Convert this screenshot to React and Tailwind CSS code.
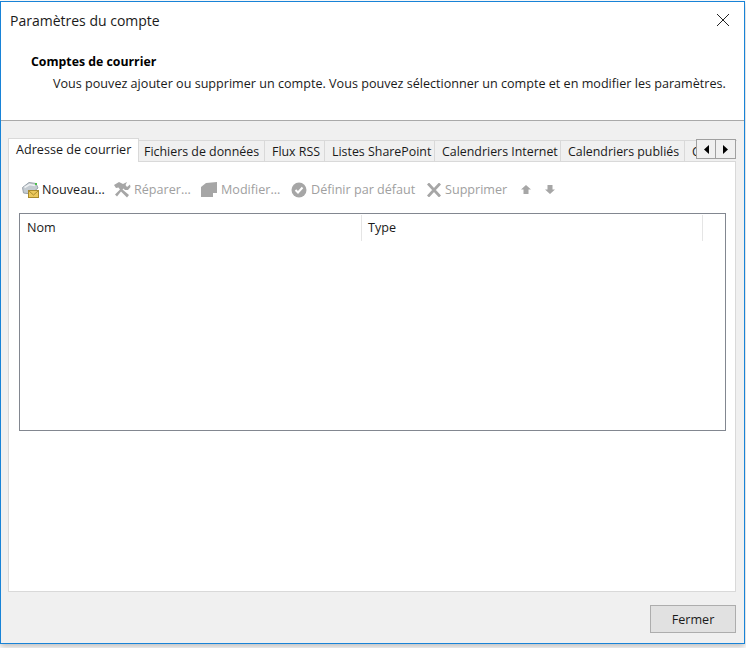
import React from 'react';

const tabs = [
  { label: 'Fichiers de données', width: 'w-[126px]', pad: 'pl-[5px]' },
  { label: 'Flux RSS', width: 'w-[60px]', pad: 'pl-[7px]' },
  { label: 'Listes SharePoint', width: 'w-[110px]', pad: 'pl-[7px]' },
  { label: 'Calendriers Internet', width: 'w-[126px]', pad: 'pl-[7px]' },
  { label: 'Calendriers publiés', width: 'w-[124px]', pad: 'pl-[7px]' },
];

const MailIcon = () => (
  <svg width="18" height="18" viewBox="0 0 18 18">
    <path d="M0.5 6.5 L7 1.5 L14 2.5 L16 7 L9 13 L1.5 12 Z" fill="#c4cbd1" stroke="#9aa3ab" strokeWidth="1" />
    <path d="M2.5 6.5 L7.5 3.5 L13 4.5" fill="none" stroke="#eef1f3" strokeWidth="1.5" />
    <rect x="13" y="2" width="2" height="2" fill="#4cc04c" />
    <rect x="6.5" y="9.5" width="10" height="7" fill="#ecc95c" stroke="#a98a2c" strokeWidth="1" />
    <path d="M6.5 9.5 L11.5 14 L16.5 9.5" fill="none" stroke="#a98a2c" strokeWidth="1" />
  </svg>
);

const RepairIcon = () => (
  <svg width="17" height="16" viewBox="0 0 17 16" fill="#a6a6a6">
    <path d="M0 3 L5 0 L9 2 L11 1 L13 0 L11.5 3 L13 5 L16 2.5 L16.5 5 L14 8 L11 8 L9.5 6.5 L8.5 7.5 L15 13 L13 15.5 L7 9.5 L3 14.5 L1 12.5 L6 7.5 L4.5 5.5 L2 6 Z" />
  </svg>
);

const ModifyIcon = () => (
  <svg width="16" height="16" viewBox="0 0 16 16" fill="#a6a6a6">
    <path d="M0 5 L5 1 L16 0 L16 11 L12 11 L12 15 L0 15 Z" />
  </svg>
);

const DefaultIcon = () => (
  <svg width="16" height="16" viewBox="0 0 16 16">
    <circle cx="8" cy="8" r="7.5" fill="#a6a6a6" />
    <path d="M4.5 8 L7 10.5 L11.5 5.5" fill="none" stroke="#ffffff" strokeWidth="2" />
  </svg>
);

const DeleteIcon = () => (
  <svg width="14" height="14" viewBox="0 0 14 14">
    <path d="M1 0.5 L13 13.5 M13 0.5 L1 13.5" stroke="#a6a6a6" strokeWidth="2.8" fill="none" />
  </svg>
);

const ArrowUp = () => (
  <svg width="10" height="9" viewBox="0 0 10 9" fill="#a6a6a6">
    <path d="M5 0 L10 4.5 L7.5 4.5 L7.5 9 L2.5 9 L2.5 4.5 L0 4.5 Z" />
  </svg>
);

const ArrowDown = () => (
  <svg width="10" height="9" viewBox="0 0 10 9" fill="#a6a6a6">
    <path d="M2.5 0 L7.5 0 L7.5 4.5 L10 4.5 L5 9 L0 4.5 L2.5 4.5 Z" />
  </svg>
);

export default function App() {
  return (
    <div className="w-[746px] h-[648px] bg-white pt-px font-['Open_Sans',sans-serif] text-[12.6px] text-[#1a1a1a] overflow-hidden">
      <div className="w-[745px] h-[643px] border border-[#1883d7] flex flex-col shadow-[0_3px_6px_rgba(0,0,0,0.25)]">
        {/* Header */}
        <div className="h-[119px] shrink-0 bg-white border-b border-[#a9a9a9] relative">
          <div className="pl-[9px] pt-[9px] text-[14px] leading-[20px]">Paramètres du compte</div>
          <button className="absolute right-[14px] top-[11px]">
            <svg width="14" height="14" viewBox="0 0 14 14">
              <path d="M1 1 L13 13 M13 1 L1 13" stroke="#222" strokeWidth="1" fill="none" />
            </svg>
          </button>
          <div className="pl-[30px] pt-[22px] font-bold text-[12.3px] leading-[17px] text-black">Comptes de courrier</div>
          <div className="pl-[52px] pt-[5px] leading-[17px] whitespace-nowrap">
            Vous pouvez ajouter ou supprimer un compte. Vous pouvez sélectionner un compte et en modifier les paramètres.
          </div>
        </div>

        {/* Body */}
        <div className="flex-1 bg-[#f0f0f0] flex flex-col px-[7px]">
          {/* Tabs */}
          <div className="mt-[17px] h-[24px] flex items-end relative z-10">
            <div className="w-[131px] h-[24px] bg-white border border-b-0 border-[#d9d9d9] pl-[7px] leading-[22px] shrink-0 whitespace-nowrap">
              Adresse de courrier
            </div>
            <div className="flex-1 flex h-[22px] overflow-hidden border-t border-[#d9d9d9] text-[12.4px]">
              {tabs.map((tab) => (
                <div
                  key={tab.label}
                  className={`${tab.width} ${tab.pad} shrink-0 border-r border-[#d9d9d9] leading-[22px] whitespace-nowrap`}
                >
                  {tab.label}
                </div>
              ))}
              <div className="pl-[7px] leading-[22px]">C</div>
            </div>
            <div className="absolute right-px top-px flex">
              <div className="w-[20px] h-[20px] border border-[#a0a0a0] bg-[#f0f0f0] flex items-center justify-center">
                <svg width="5" height="9" viewBox="0 0 5 9"><path d="M5 0 L5 9 L0 4.5 Z" fill="#000" /></svg>
              </div>
              <div className="w-[20px] h-[20px] border border-l-0 border-[#a0a0a0] bg-[#f0f0f0] flex items-center justify-center">
                <svg width="5" height="9" viewBox="0 0 5 9"><path d="M0 0 L0 9 L5 4.5 Z" fill="#000" /></svg>
              </div>
            </div>
          </div>

          {/* Tab panel */}
          <div className="w-[728px] h-[431px] -mt-px bg-white border border-[#d9d9d9] flex flex-col px-[10px]">
            <div className="h-[51px] pt-[19px] flex items-start text-[#a0a0a0] leading-[18px] whitespace-nowrap">
              <div className="flex items-center gap-[2px] text-[#1a1a1a] ml-[3px] w-[92px]">
                <MailIcon />
                <span>Nouveau...</span>
              </div>
              <div className="flex items-center gap-[3px] w-[87px]">
                <RepairIcon />
                <span>Réparer...</span>
              </div>
              <div className="flex items-center gap-[4px] w-[90px]">
                <ModifyIcon />
                <span>Modifier...</span>
              </div>
              <div className="flex items-center gap-[4px] w-[136px]">
                <DefaultIcon />
                <span>Définir par défaut</span>
              </div>
              <div className="flex items-center gap-[4px] w-[94px]">
                <DeleteIcon />
                <span>Supprimer</span>
              </div>
              <div className="flex items-center gap-[14px] h-[16px]">
                <ArrowUp />
                <ArrowDown />
              </div>
            </div>

            {/* List */}
            <div className="w-[707px] h-[218px] border border-[#828790] bg-white">
              <div className="flex h-[26px] mt-px leading-[26px] text-[#1a1a1a]">
                <div className="w-[342px] pl-[7px] border-r border-[#e5e5e5]">Nom</div>
                <div className="w-[341px] pl-[6px] border-r border-[#e5e5e5]">Type</div>
              </div>
            </div>
          </div>

          {/* Footer */}
          <div className="flex justify-end mt-[13px]">
            <button className="w-[86px] h-[28px] pt-[2px] bg-[#e1e1e1] border border-[#adadad] text-[#1a1a1a] mr-px">
              Fermer
            </button>
          </div>
        </div>
      </div>
    </div>
  );
}
